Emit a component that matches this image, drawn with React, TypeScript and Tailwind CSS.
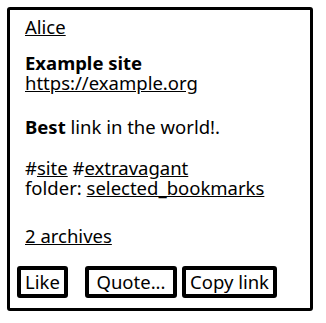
import React from "react";

const font = { fontFamily: '"Noto Sans", "Open Sans", sans-serif' };

export default function App() {
  return (
    <div className="bg-white w-[326px] h-[323px] p-[7px]" style={font}>
      <div className="border-[3px] border-black rounded-[3px] w-[306px] h-[304px] px-[15px] pt-[7px] text-[18.5px] leading-[20px] text-black">
        <p>
          <a className="underline">Alice</a>
        </p>
        <div className="mt-[16px]">
          <div className="font-bold">Example site</div>
          <a className="underline">https://example.org</a>
        </div>
        <p className="mt-[24px]">
          <b>Best</b> link in the world!.
        </p>
        <div className="mt-[21px]">
          <div>
            #<a className="underline">site</a> #<a className="underline">extravagant</a>
          </div>
          <div>
            folder: <a className="underline">selected_bookmarks</a>
          </div>
        </div>
        <p className="mt-[28px]">
          <a className="underline">2 archives</a>
        </p>
        <div className="mt-[20px] -ml-[8px] flex items-center">
          <button className="w-[51px] border-4 border-black rounded-[3px] h-[32px]">Like</button>
          <button className="ml-[17px] w-[92px] border-4 border-black rounded-[3px] h-[32px]">Quote...</button>
          <button className="ml-[5px] w-[95px] border-4 border-black rounded-[3px] h-[32px]">Copy link</button>
        </div>
      </div>
    </div>
  );
}
